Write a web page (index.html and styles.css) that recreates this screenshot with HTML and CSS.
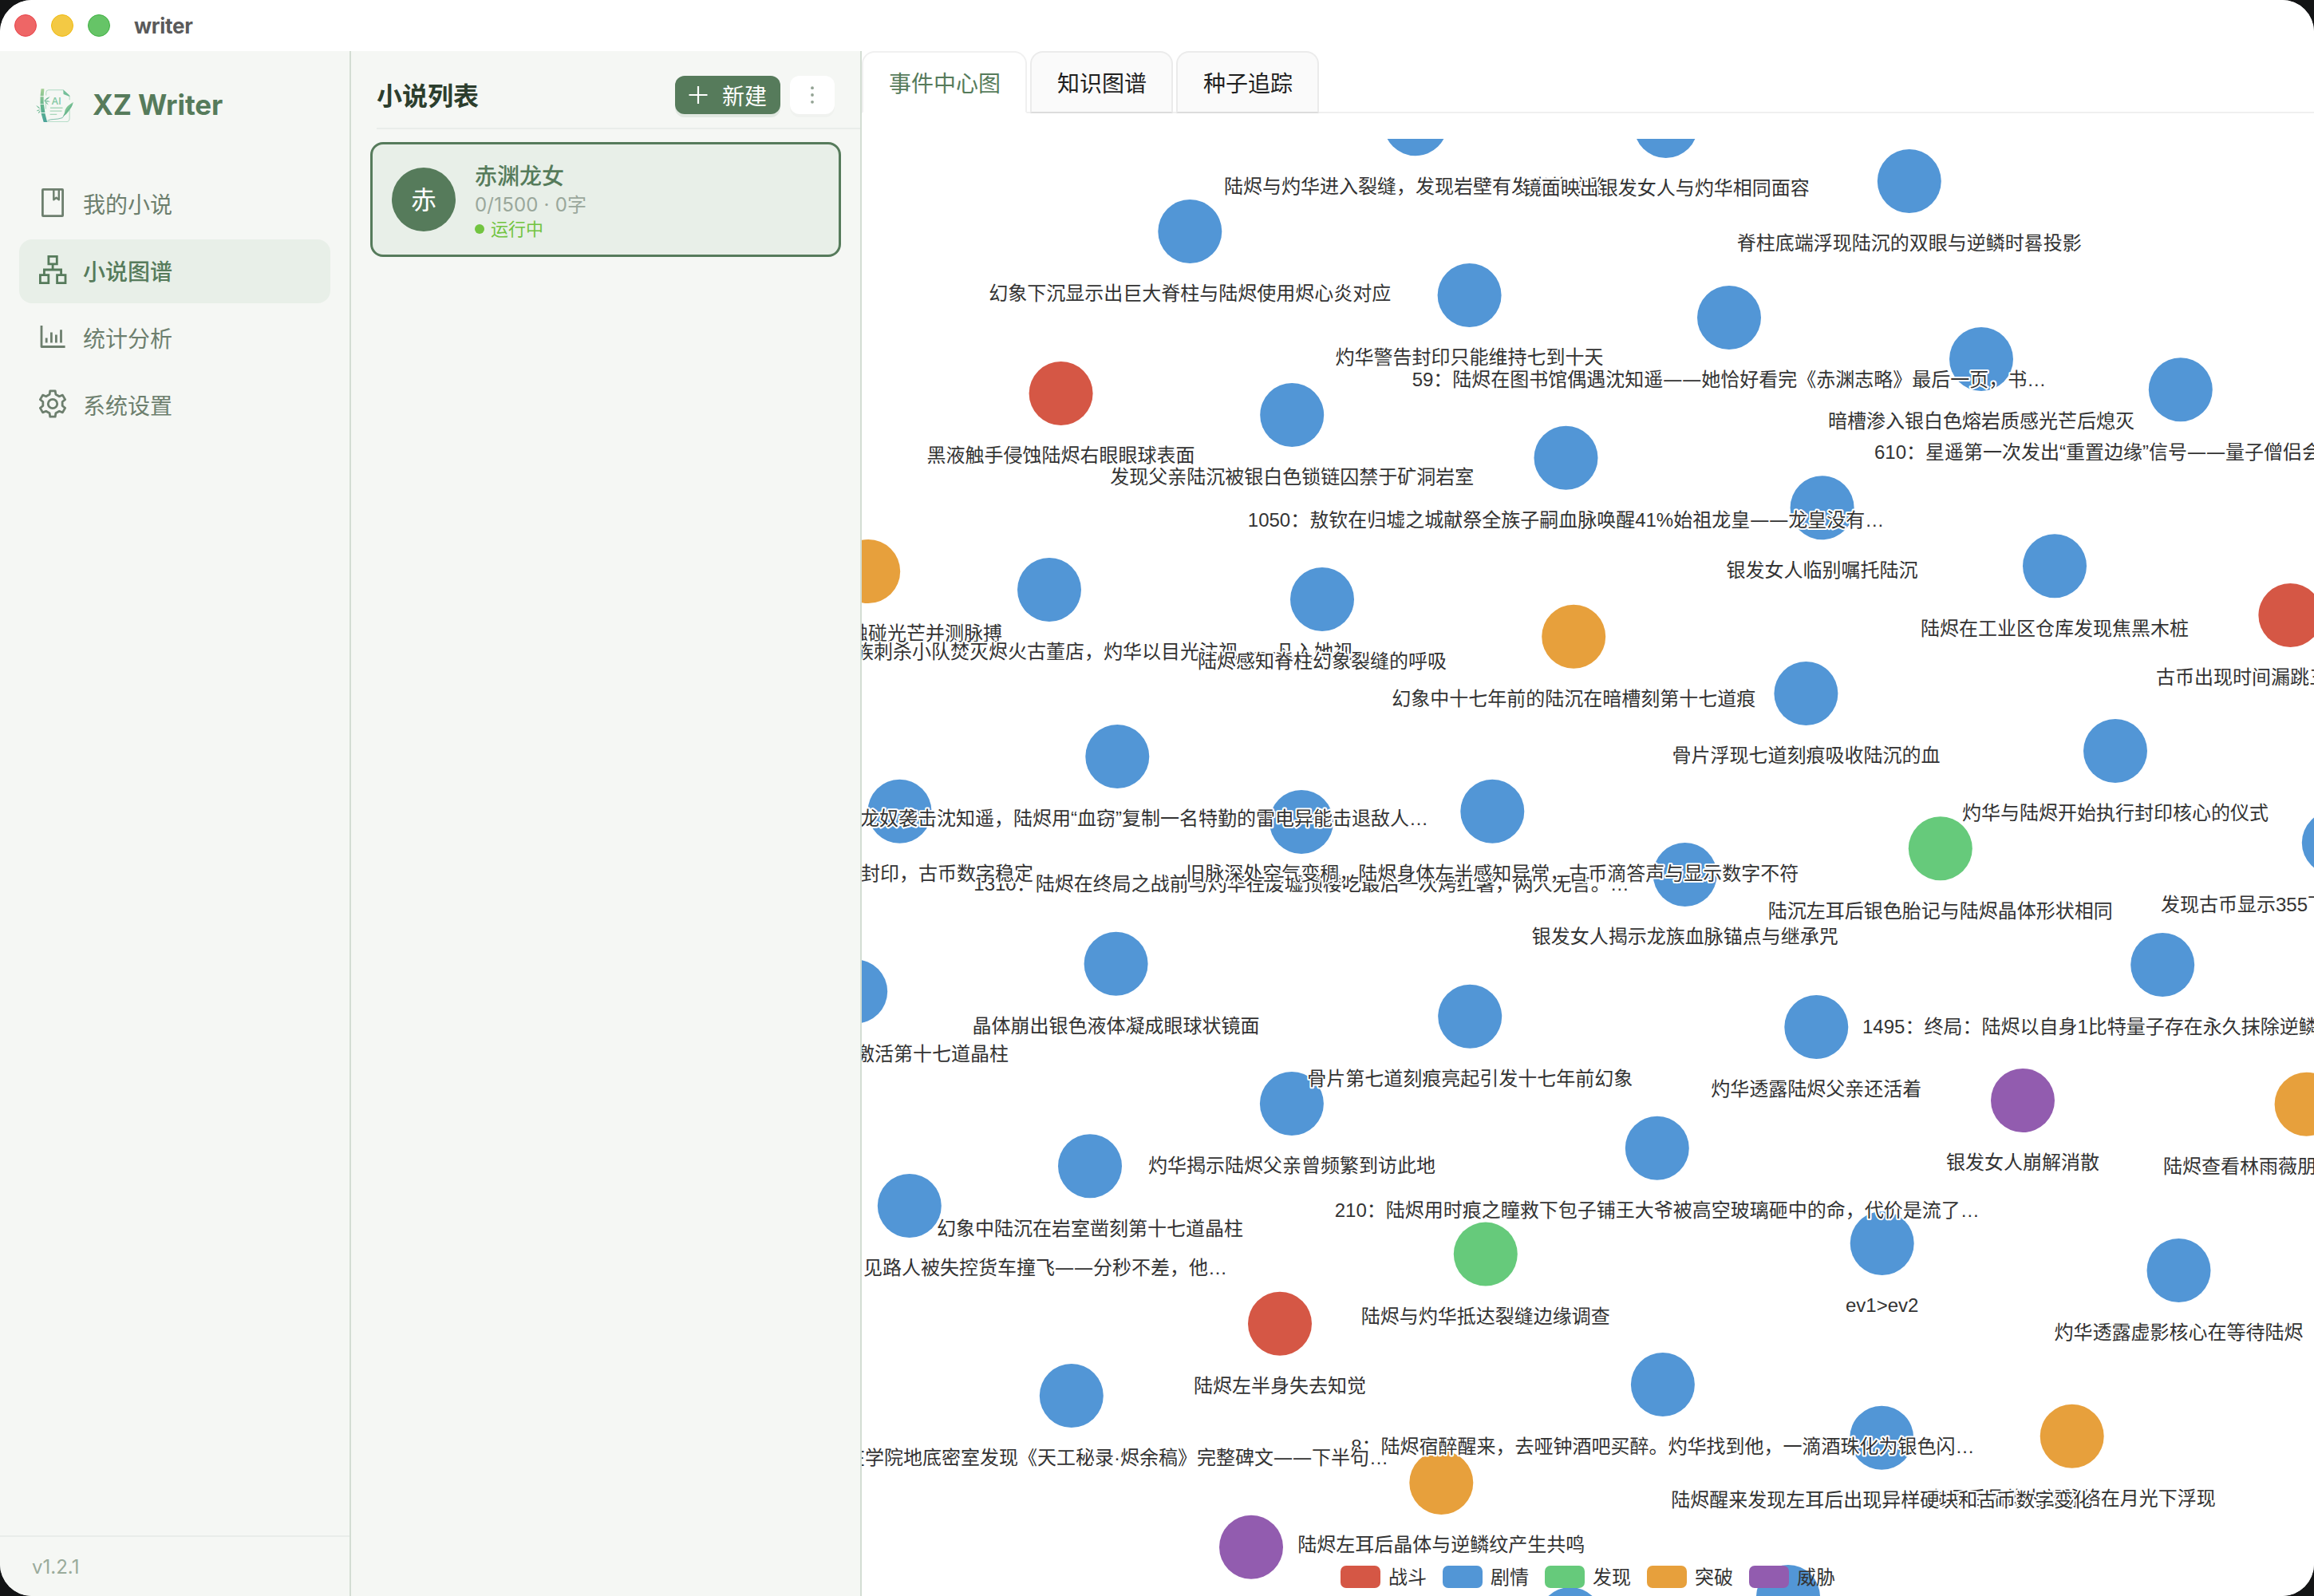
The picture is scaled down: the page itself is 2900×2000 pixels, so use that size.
FILE: index.html
```html
<!DOCTYPE html>
<html lang="zh-CN">
<head>
    <meta charset="UTF-8">
    <meta name="viewport" content="width=device-width, initial-scale=1.0">
    <title>writer</title>
    <link rel="stylesheet" href="styles.css">
</head>
<body>
    <div class="window">
        <header class="titlebar">
            <span class="light red"></span>
            <span class="light yellow"></span>
            <span class="light green"></span>
            <span class="window-title">writer</span>
        </header>

        <div class="main">
            <!-- Left navigation -->
            <aside class="sidebar">
                <div class="brand">
                    <svg class="logo" viewBox="0 0 136 118" preserveAspectRatio="none">
                        <defs>
                            <linearGradient id="bamboo" x1="0" y1="0" x2="0" y2="1">
                                <stop offset="0" stop-color="#a5cf95"/>
                                <stop offset="0.5" stop-color="#63b58c"/>
                                <stop offset="1" stop-color="#4aa39a"/>
                            </linearGradient>
                        </defs>
                        <path fill="none" stroke="#8fcdae" stroke-width="2" d="M37 24V14Q37 5 46 5H99L122 26V40M122 72V104Q122 117 110 117H34M36 50V72"/>
                        <path fill="#74bf9a" d="M99 4L122 24V28L100 20Z"/>
                        <path fill="url(#bamboo)" d="M19 1H30L28 26H16ZM16 29H28V52L31 54H16ZM16 56H29L33 84H19ZM19 87H33L41 118H28Z"/>
                        <path fill="#6bb892" d="M30 42Q38 32 51 28Q46 37 33 42Q44 42 52 46Q42 48 33 44Q44 51 46 58Q34 52 30 42ZM17 72Q6 68 0 58Q11 63 17 72ZM16 74Q6 74 2 79Q12 80 16 74ZM16 77Q9 80 8 88Q15 86 16 77Z"/>
                        <path stroke="#a9d7bb" stroke-width="4" d="M52 68H97M51 79H94M51 91H76"/>
                        <path fill="#7dc394" d="M136 48Q113 60 106 75Q105 86 98 98Q111 92 121 77Q131 66 136 48Z"/>
                        <path fill="none" stroke="#4fa58c" stroke-width="2" d="M132 56Q112 80 96 103Q80 108 66 108T42 113"/>
                        <text class="logo-text" x="57" y="55">AI</text>
                    </svg>
                    <span class="brand-name">XZ Writer</span>
                </div>

                <nav class="menu">
                    <a class="menu-item">
                        <svg class="menu-icon" viewBox="0 0 36 36">
                            <rect x="5.4" y="1.4" width="25.2" height="33.2" rx="0.6"/>
                            <path stroke-width="2.4" d="M19.3 1.5V14.3L22.6 11.8L25.8 14.3V1.5"/>
                        </svg>
                        <span class="menu-text">我的小说</span>
                    </a>
                    <a class="menu-item active">
                        <svg class="menu-icon" viewBox="0 0 36 36">
                            <path d="M12.9 1.4H23.3V10.8H12.9ZM2.4 24.7H12.8V34.6H2.4ZM23.6 24.7H34V34.6H23.6ZM18.1 11V18M7.4 24V18H28.6V24"/>
                        </svg>
                        <span class="menu-text">小说图谱</span>
                    </a>
                    <a class="menu-item">
                        <svg class="menu-icon" viewBox="0 0 36 36">
                            <path d="M4 4V30.5H33.6M10.2 19.6V25.6M16.4 12.6V25.6M22.4 15.6V25.6M28.5 9.3V25.6"/>
                        </svg>
                        <span class="menu-text">统计分析</span>
                    </a>
                    <a class="menu-item">
                        <svg class="menu-icon" viewBox="0 0 36 36">
                            <path d="M14.8 1.8H21.2L21.9 6.2L26.27 8.72L30.43 7.13L33.63 12.67L30.17 15.48V20.52L33.63 23.33L30.43 28.87L26.27 27.28L21.9 29.8L21.2 34.2H14.8L14.1 29.8L9.73 27.28L5.57 28.87L2.37 23.33L5.83 20.52V15.48L2.37 12.67L5.57 7.13L9.73 8.72L14.1 6.2Z"/>
                            <circle cx="18" cy="18" r="5.7"/>
                        </svg>
                        <span class="menu-text">系统设置</span>
                    </a>
                </nav>

                <div class="version">v1.2.1</div>
            </aside>

            <!-- Novel list -->
            <section class="novels">
                <div class="novels-header">
                    <h2>小说列表</h2>
                    <button class="btn-new">
                        <svg class="plus" viewBox="0 0 24 24"><path d="M12 1V23M0.5 12H23.5"/></svg>
                        <span>新建</span>
                    </button>
                    <button class="btn-more">
                        <svg class="dots" viewBox="0 0 4 22">
                            <circle cx="2" cy="2.2" r="1.9"/>
                            <circle cx="2" cy="11" r="1.9"/>
                            <circle cx="2" cy="19.8" r="1.9"/>
                        </svg>
                    </button>
                </div>
                <div class="novel-card">
                    <div class="avatar">赤</div>
                    <div class="novel-info">
                        <div class="novel-name">赤渊龙女</div>
                        <div class="novel-meta">0/1500 · 0字</div>
                        <div class="novel-status"><i class="status-dot"></i>运行中</div>
                    </div>
                </div>
            </section>

            <!-- Graph -->
            <section class="content">
                <div class="tabs">
                    <div class="tab active">事件中心图</div>
                    <div class="tab">知识图谱</div>
                    <div class="tab">种子追踪</div>
                </div>
                <div class="chart">
                    <svg id="graph" class="graph" viewBox="1080 174 1820 1826"></svg>
                    <div class="legend">
                        <span class="legend-item"><i class="swatch battle"></i><span class="legend-text">战斗</span></span>
                        <span class="legend-item"><i class="swatch plot"></i><span class="legend-text">剧情</span></span>
                        <span class="legend-item"><i class="swatch discovery"></i><span class="legend-text">发现</span></span>
                        <span class="legend-item"><i class="swatch breakthrough"></i><span class="legend-text">突破</span></span>
                        <span class="legend-item"><i class="swatch threat"></i><span class="legend-text">威胁</span></span>
                    </div>
                </div>
            </section>
        </div>
    </div>

    <script src="graph.js"></script>
</body>
</html>
```

FILE: styles.css
```css
* {
    box-sizing: border-box;
}
body {
    margin: 0;
    background: #131415;
    font-family: Inter, "Noto Sans CJK SC", sans-serif;
    font-size: 28px;
}
.window {
    display: flex;
    flex-direction: column;
    width: 2900px;
    height: 2000px;
    background: #fff;
    border-radius: 40px;
    overflow: hidden;
}

/* title bar */
.titlebar {
    display: flex;
    align-items: center;
    gap: 18px;
    height: 64px;
    padding-left: 18px;
    background: #fff;
}
.light {
    width: 28px;
    height: 28px;
    border-radius: 50%;
}
.light.red {
    background: #ee6666;
    border: 1px solid #e8434a;
}
.light.yellow {
    background: #f3c944;
    border: 1px solid #efb90f;
}
.light.green {
    background: #66c467;
    border: 1px solid #3fb043;
}
.window-title {
    margin-left: 12px;
    font-size: 26px;
    font-weight: 700;
    letter-spacing: -0.3px;
    color: #5a5a5a;
}

.main {
    display: flex;
    flex: 1;
    min-height: 0;
}

/* sidebar */
.sidebar {
    display: flex;
    flex-direction: column;
    width: 440px;
    background: #f5f7f4;
    border-right: 2px solid #d3ddd3;
}
.brand {
    display: flex;
    align-items: center;
    gap: 24px;
    height: 136px;
    padding-left: 45px;
}
.logo {
    width: 47px;
    height: 42px;
}
.logo-text {
    font-family: "Open Sans", sans-serif;
    font-size: 36px;
    font-weight: 600;
    fill: #84c8a4;
}
.brand-name {
    margin-bottom: 2px;
    font-size: 35px;
    font-weight: 700;
    letter-spacing: -0.1px;
    color: #567b5b;
}
.menu {
    display: flex;
    flex-direction: column;
    gap: 4px;
    flex: 1;
    padding: 16px 24px;
}
.menu-item {
    display: flex;
    align-items: center;
    gap: 20px;
    height: 80px;
    padding-left: 24px;
    border-radius: 16px;
    color: #6d7f6e;
}
.menu-item.active {
    background: #e8efe8;
    color: #567b5b;
    font-weight: 500;
}
.menu-icon {
    width: 36px;
    height: 36px;
    margin-bottom: 4px;
    fill: none;
    stroke: currentColor;
    stroke-width: 2.8;
    stroke-linejoin: round;
}
.menu-item.active .menu-icon {
    stroke-linejoin: miter;
}
.menu-text {
    margin-bottom: 2px;
}
.version {
    height: 76px;
    padding-left: 40px;
    border-top: 2px solid #e9edea;
    font-size: 24px;
    line-height: 76px;
    color: #9aab9b;
}

/* novel list */
.novels {
    width: 640px;
    background: #f5f7f4;
    border-right: 2px solid #d3ddd3;
}
.novels-header {
    display: flex;
    align-items: center;
    gap: 12px;
    height: 98px;
    margin-left: 32px;
    padding: 14px 32px 0 0;
    border-bottom: 2px solid #e9edea;
}
.novels-header h2 {
    flex: 1;
    margin: 4px 0 0;
    font-size: 32px;
    font-weight: 700;
    line-height: 48px;
    color: #2c3e2d;
}
.btn-new,
.btn-more {
    display: flex;
    align-items: center;
    justify-content: center;
    height: 48px;
    padding: 0;
    border: none;
    border-radius: 12px;
    font-family: inherit;
    font-size: 28px;
}
.btn-new {
    gap: 18px;
    width: 132px;
    background: #567b5b;
    color: #fff;
    box-shadow: 0 4px 0 rgba(86, 123, 91, 0.12);
}
.btn-more {
    width: 56px;
    background: #fff;
    box-shadow: 0 4px 0 rgba(0, 0, 0, 0.02);
}
.plus {
    width: 24px;
    height: 24px;
    stroke: #fff;
    stroke-width: 2.2;
}
.dots {
    width: 4px;
    height: 22px;
    fill: #93a394;
}
.novel-card {
    display: flex;
    align-items: center;
    gap: 24px;
    height: 144px;
    margin: 16px 24px;
    padding: 0 24px;
    border: 3px solid #567b5b;
    border-radius: 16px;
    background: #e8efe8;
}
.avatar {
    width: 80px;
    height: 80px;
    border-radius: 50%;
    background: #567b5b;
    color: #fff;
    font-size: 32px;
    line-height: 82px;
    text-align: center;
}
.novel-info {
    padding-top: 4px;
}
.novel-name {
    height: 38px;
    line-height: 38px;
    font-weight: 500;
    color: #567b5b;
}
.novel-meta {
    height: 32px;
    font-size: 24px;
    line-height: 34px;
    letter-spacing: 0.2px;
    color: #9aa79b;
}
.novel-status {
    display: flex;
    align-items: center;
    gap: 8px;
    height: 30px;
    font-size: 22px;
    line-height: 30px;
    color: #72c440;
}
.status-dot {
    width: 12px;
    height: 12px;
    border-radius: 50%;
    background: #72c440;
}

/* tabs */
.content {
    display: flex;
    flex-direction: column;
    flex: 1;
    min-width: 0;
    background: #fff;
}
.tabs {
    display: flex;
    gap: 4px;
    height: 78px;
    box-shadow: inset 0 -2px 0 #f0f0f0;
}
.tab {
    padding: 0 31px 0 32px;
    border: 2px solid #ebebeb;
    border-bottom-color: #dcdcdc;
    border-radius: 16px 16px 0 0;
    background: #fafafa;
    line-height: 78px;
    color: #1f1f1f;
}
.tab.active {
    background: #fff;
    border-color: #f0f0f0;
    border-bottom-color: #fff;
    color: #567b5b;
}

/* graph */
.chart {
    position: relative;
    flex: 1;
    padding-top: 32px;
}
.graph {
    display: block;
    width: 1820px;
    height: 1826px;
}
.label {
    font-family: "Liberation Sans", "Noto Sans CJK SC", sans-serif;
    font-size: 24px;
    fill: #333;
    stroke: #fff;
    stroke-width: 4px;
    stroke-linejoin: round;
    paint-order: stroke;
}
.dash {
    font-family: "Open Sans", sans-serif;
}
.battle {
    fill: #d55745;
    background: #d55745;
}
.plot {
    fill: #5296d6;
    background: #5296d6;
}
.discovery {
    fill: #66ca7b;
    background: #66ca7b;
}
.breakthrough {
    fill: #e7a03c;
    background: #e7a03c;
}
.threat {
    fill: #925caf;
    background: #925caf;
}
.legend {
    position: absolute;
    left: 0;
    right: 0;
    bottom: 10px;
    display: flex;
    justify-content: center;
    gap: 20px;
}
.legend-item {
    display: flex;
    align-items: center;
    gap: 10px;
    height: 28px;
    font-size: 24px;
    color: #333;
}
.legend-text {
    margin-bottom: 3px;
}
.swatch {
    width: 50px;
    height: 28px;
    border-radius: 7px;
}
```

FILE: graph.js
```js
// [x, y, category, label, anchor, labelX]
// anchor / labelX are only set for labels that run past the edge of the view
const nodes = [
    [1774, 155.3, "plot", "陆烬与灼华进入裂缝，发现岩壁有发光的纹路"],
    [2087.7, 158, "plot", "镜面映出银发女人与灼华相同面容"],
    [2392.8, 227, "plot", "脊柱底端浮现陆沉的双眼与逆鳞时晷投影"],
    [1491.3, 290, "plot", "幻象下沉显示出巨大脊柱与陆烬使用烬心炎对应"],
    [1841.6, 370, "plot", "灼华警告封印只能维持七到十天"],
    [2167, 398, "plot", "59：陆烬在图书馆偶遇沈知遥——她恰好看完《赤渊志略》最后一页，书…"],
    [2483, 450, "plot", "暗槽渗入银白色熔岩质感光芒后熄灭"],
    [2732.8, 488.3, "plot", "610：星遥第一次发出“重置边缘”信号——量子僧侣会", "start", 2349],
    [1329.6, 493, "battle", "黑液触手侵蚀陆烬右眼眼球表面"],
    [1619.2, 520, "plot", "发现父亲陆沉被银白色锁链囚禁于矿洞岩室"],
    [1962.5, 573.8, "plot", "1050：敖钦在归墟之城献祭全族子嗣血脉唤醒41%始祖龙皇——龙皇没有…"],
    [2283.6, 636.3, "plot", "银发女人临别嘱托陆沉"],
    [2575, 709.2, "plot", "陆烬在工业区仓库发现焦黑木桩"],
    [2870.4, 771, "battle", "古币出现时间漏跳三", "start", 2702],
    [1088.2, 716, "breakthrough", "触碰光芒并测脉搏", "end", 1256],
    [1315, 739, "plot", "族刺杀小队焚灭烬火古董店，灼华以目光注视——凡入她视…", "end", 1719],
    [1657, 751, "plot", "陆烬感知脊柱幻象裂缝的呼吸"],
    [1972.2, 797.8, "breakthrough", "幻象中十七年前的陆沉在暗槽刻第十七道痕"],
    [2263.4, 869, "plot", "骨片浮现七道刻痕吸收陆沉的血"],
    [2651, 941, "plot", "灼华与陆烬开始执行封印核心的仪式"],
    [1400.3, 948, "plot", "龙奴袭击沈知遥，陆烬用“血窃”复制一名特勤的雷电异能击退敌人…", "end", 1790],
    [1631, 1030, "plot", "1310：陆烬在终局之战前与灼华在废墟顶楼吃最后一次烤红薯，两人无言。…"],
    [1127.5, 1016.7, "plot", "封印，古币数字稳定", "end", 1295],
    [1870.3, 1016.7, "plot", "旧脉深处空气变稠，陆烬身体左半感知异常，古币滴答声与显示数字不符"],
    [2431.8, 1063.2, "discovery", "陆沉左耳后银色胎记与陆烬晶体形状相同"],
    [2924.8, 1056, "plot", "发现古币显示355下", "start", 2708],
    [2111.7, 1096, "plot", "银发女人揭示龙族血脉锚点与继承咒"],
    [1398.6, 1207.7, "plot", "晶体崩出银色液体凝成眼球状镜面"],
    [2710.2, 1209, "plot", "1495：终局：陆烬以自身1比特量子存在永久抹除逆鳞", "start", 2334],
    [1072.2, 1242.5, "plot", "激活第十七道晶柱", "end", 1264],
    [1842.2, 1273.7, "plot", "骨片第七道刻痕亮起引发十七年前幻象"],
    [2276.3, 1287, "plot", "灼华透露陆烬父亲还活着"],
    [2535, 1379, "threat", "银发女人崩解消散"],
    [2890.6, 1383.7, "breakthrough", "陆烬查看林雨薇朋", "start", 2711],
    [1618.9, 1383, "plot", "灼华揭示陆烬父亲曾频繁到访此地"],
    [2076.8, 1438.8, "plot", "210：陆烬用时痕之瞳救下包子铺王大爷被高空玻璃砸中的命，代价是流了…"],
    [1366, 1461.3, "plot", "幻象中陆沉在岩室凿刻第十七道晶柱"],
    [1139.8, 1511, "plot", "见路人被失控货车撞飞——分秒不差，他…", "end", 1538],
    [2358.7, 1558, "plot", "ev1>ev2"],
    [1861.8, 1571.6, "discovery", "陆烬与灼华抵达裂缝边缘调查"],
    [2730.5, 1592, "plot", "灼华透露虚影核心在等待陆烬"],
    [1604, 1658.7, "battle", "陆烬左半身失去知觉"],
    [2083.9, 1735, "plot", "8：陆烬宿醉醒来，去哑钟酒吧买醉。灼华找到他，一滴酒珠化为银色闪…"],
    [1342.8, 1749, "plot", "在学院地底密室发现《天工秘录·烬余稿》完整碑文——下半句…", "end", 1740],
    [2596.7, 1799.7, "breakthrough", "左耳后晶体内部脉络在月光下浮现"],
    [2358.2, 1801.7, "plot", "陆烬醒来发现左耳后出现异样硬块和古币数字变化"],
    [1806.3, 1858, "breakthrough", "陆烬左耳后晶体与逆鳞纹产生共鸣"],
    [1568, 1938.7, "threat", ""],
    [2241, 2001, "plot", ""],
    [1968, 2029, "plot", ""]
];

const circles = nodes.map(([x, y, type]) =>
    `<circle class="${type}" cx="${x}" cy="${y}" r="40"/>`
);

// labels go on top of every circle
const labels = nodes.filter(n => n[3]).map(([x, y, type, text, anchor, labelX]) => {
    const content = text.replace(">", "&gt;").replace(/——/g, '<tspan class="dash">——</tspan>');
    return `<text class="label" x="${labelX || x}" y="${y + 86.4}" text-anchor="${anchor || "middle"}">${content}</text>`;
});

document.getElementById("graph").innerHTML = circles.join("") + labels.join("");
```
